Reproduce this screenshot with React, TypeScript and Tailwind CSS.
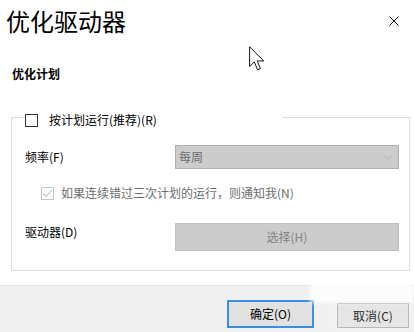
import React from 'react';

const font = { fontFamily: '"Noto Sans CJK SC", "Noto Sans", sans-serif' };

// Windows style "Optimize Drives" schedule dialog
export default function App() {
  return (
    <div style={font} className="relative w-[414px] h-[332px] bg-white overflow-hidden flex flex-col text-[12px] text-[#111]">
      {/* header */}
      <div className="flex items-start justify-between">
        <h1 className="ml-[6px] mt-[9px] text-[24px] leading-[24px] text-black">优化驱动器</h1>
        <svg className="mt-[16px] mr-[15px]" width="10" height="10" viewBox="0 0 10 10">
          <path d="M0.5 0.5 L9.5 9.5 M9.5 0.5 L0.5 9.5" stroke="#111" strokeWidth="1" />
        </svg>
      </div>

      <h2 className="ml-[12px] mt-[33px] font-bold leading-[16px] text-black">优化计划</h2>

      {/* group box */}
      <fieldset className="ml-[11px] mt-[24px] w-[399px] border border-[#dcdcdc] pb-[19px]">
        <legend className="ml-[12px] w-[258px] pt-[6px] pl-[1px]">
          <label className="flex items-center h-[16px] gap-[11px]">
            <span className="w-[13px] h-[13px] border border-[#333] bg-white" />
            <span className="leading-[16px] text-black">按计划运行(推荐)(R)</span>
          </label>
        </legend>

        <div className="mt-[17px] flex items-center pl-[13px] pr-[10px]">
          <span className="flex-1 text-black">频率(F)</span>
          <div className="w-[224px] h-[24px] bg-[#cccccc] border border-[#adadad] flex items-center justify-between pl-[3px] pr-[6px]">
            <span className="text-[#6d6d6d]">每周</span>
            <svg width="9" height="5" viewBox="0 0 9 5">
              <path d="M0.5 0.5 L4.5 4.5 L8.5 0.5" fill="none" stroke="#b0b0b0" strokeWidth="0.9" />
            </svg>
          </div>
        </div>

        <div className="mt-[16px] flex items-center h-[16px] pl-[29px] gap-[7px]">
          <span className="w-[13px] h-[13px] border border-[#c4c4c4] bg-white flex items-center justify-center">
            <svg width="11" height="9" viewBox="0 0 11 9">
              <path d="M1 4.5 L4 7.5 L10 1" fill="none" stroke="#c0c0c0" strokeWidth="1.1" />
            </svg>
          </span>
          <span className="leading-[16px] text-[#6d6d6d]">如果连续错过三次计划的运行，则通知我(N)</span>
        </div>

        <div className="mt-[22px] flex items-start pl-[13px] pr-[10px]">
          <span className="flex-1 mt-[1px] leading-[16px] text-black">驱动器(D)</span>
          <button className="w-[224px] h-[28px] bg-[#cccccc] border border-[#bfbfbf] text-[#838383]">选择(H)</button>
        </div>
      </fieldset>

      {/* footer */}
      <div className="mt-[14px] flex-1 bg-[#f0f0f0] border-t border-[#e3e3e3] flex items-end justify-end pb-[4px] pr-[5px] gap-[23px]">
        <button className="w-[87px] h-[28px] border-2 border-[#3a8ee6] bg-[#e1e1e1] text-black">确定(O)</button>
        <button className="w-[72px] h-[25px] border border-[#adadad] bg-[#e1e1e1] text-black">取消(C)</button>
      </div>

      {/* faint watermark smear over the footer corner */}
      <div className="absolute left-[310px] top-[281px] w-[104px] h-[22px] bg-white/80 blur-[2px]" />
      <div className="absolute left-[330px] top-[303px] w-[84px] h-[29px] bg-white/15 blur-[3px]" />

      {/* mouse pointer */}
      <svg className="absolute left-[249px] top-[46px]" width="16" height="25" viewBox="0 0 13 20">
        <path d="M0.5 0.5 L0.5 16.5 L4.3 12.8 L7 19.2 L9.3 18.2 L6.7 12 L12 12 Z" fill="#fff" stroke="#111" strokeWidth="0.8" strokeLinejoin="round" />
      </svg>
    </div>
  );
}
